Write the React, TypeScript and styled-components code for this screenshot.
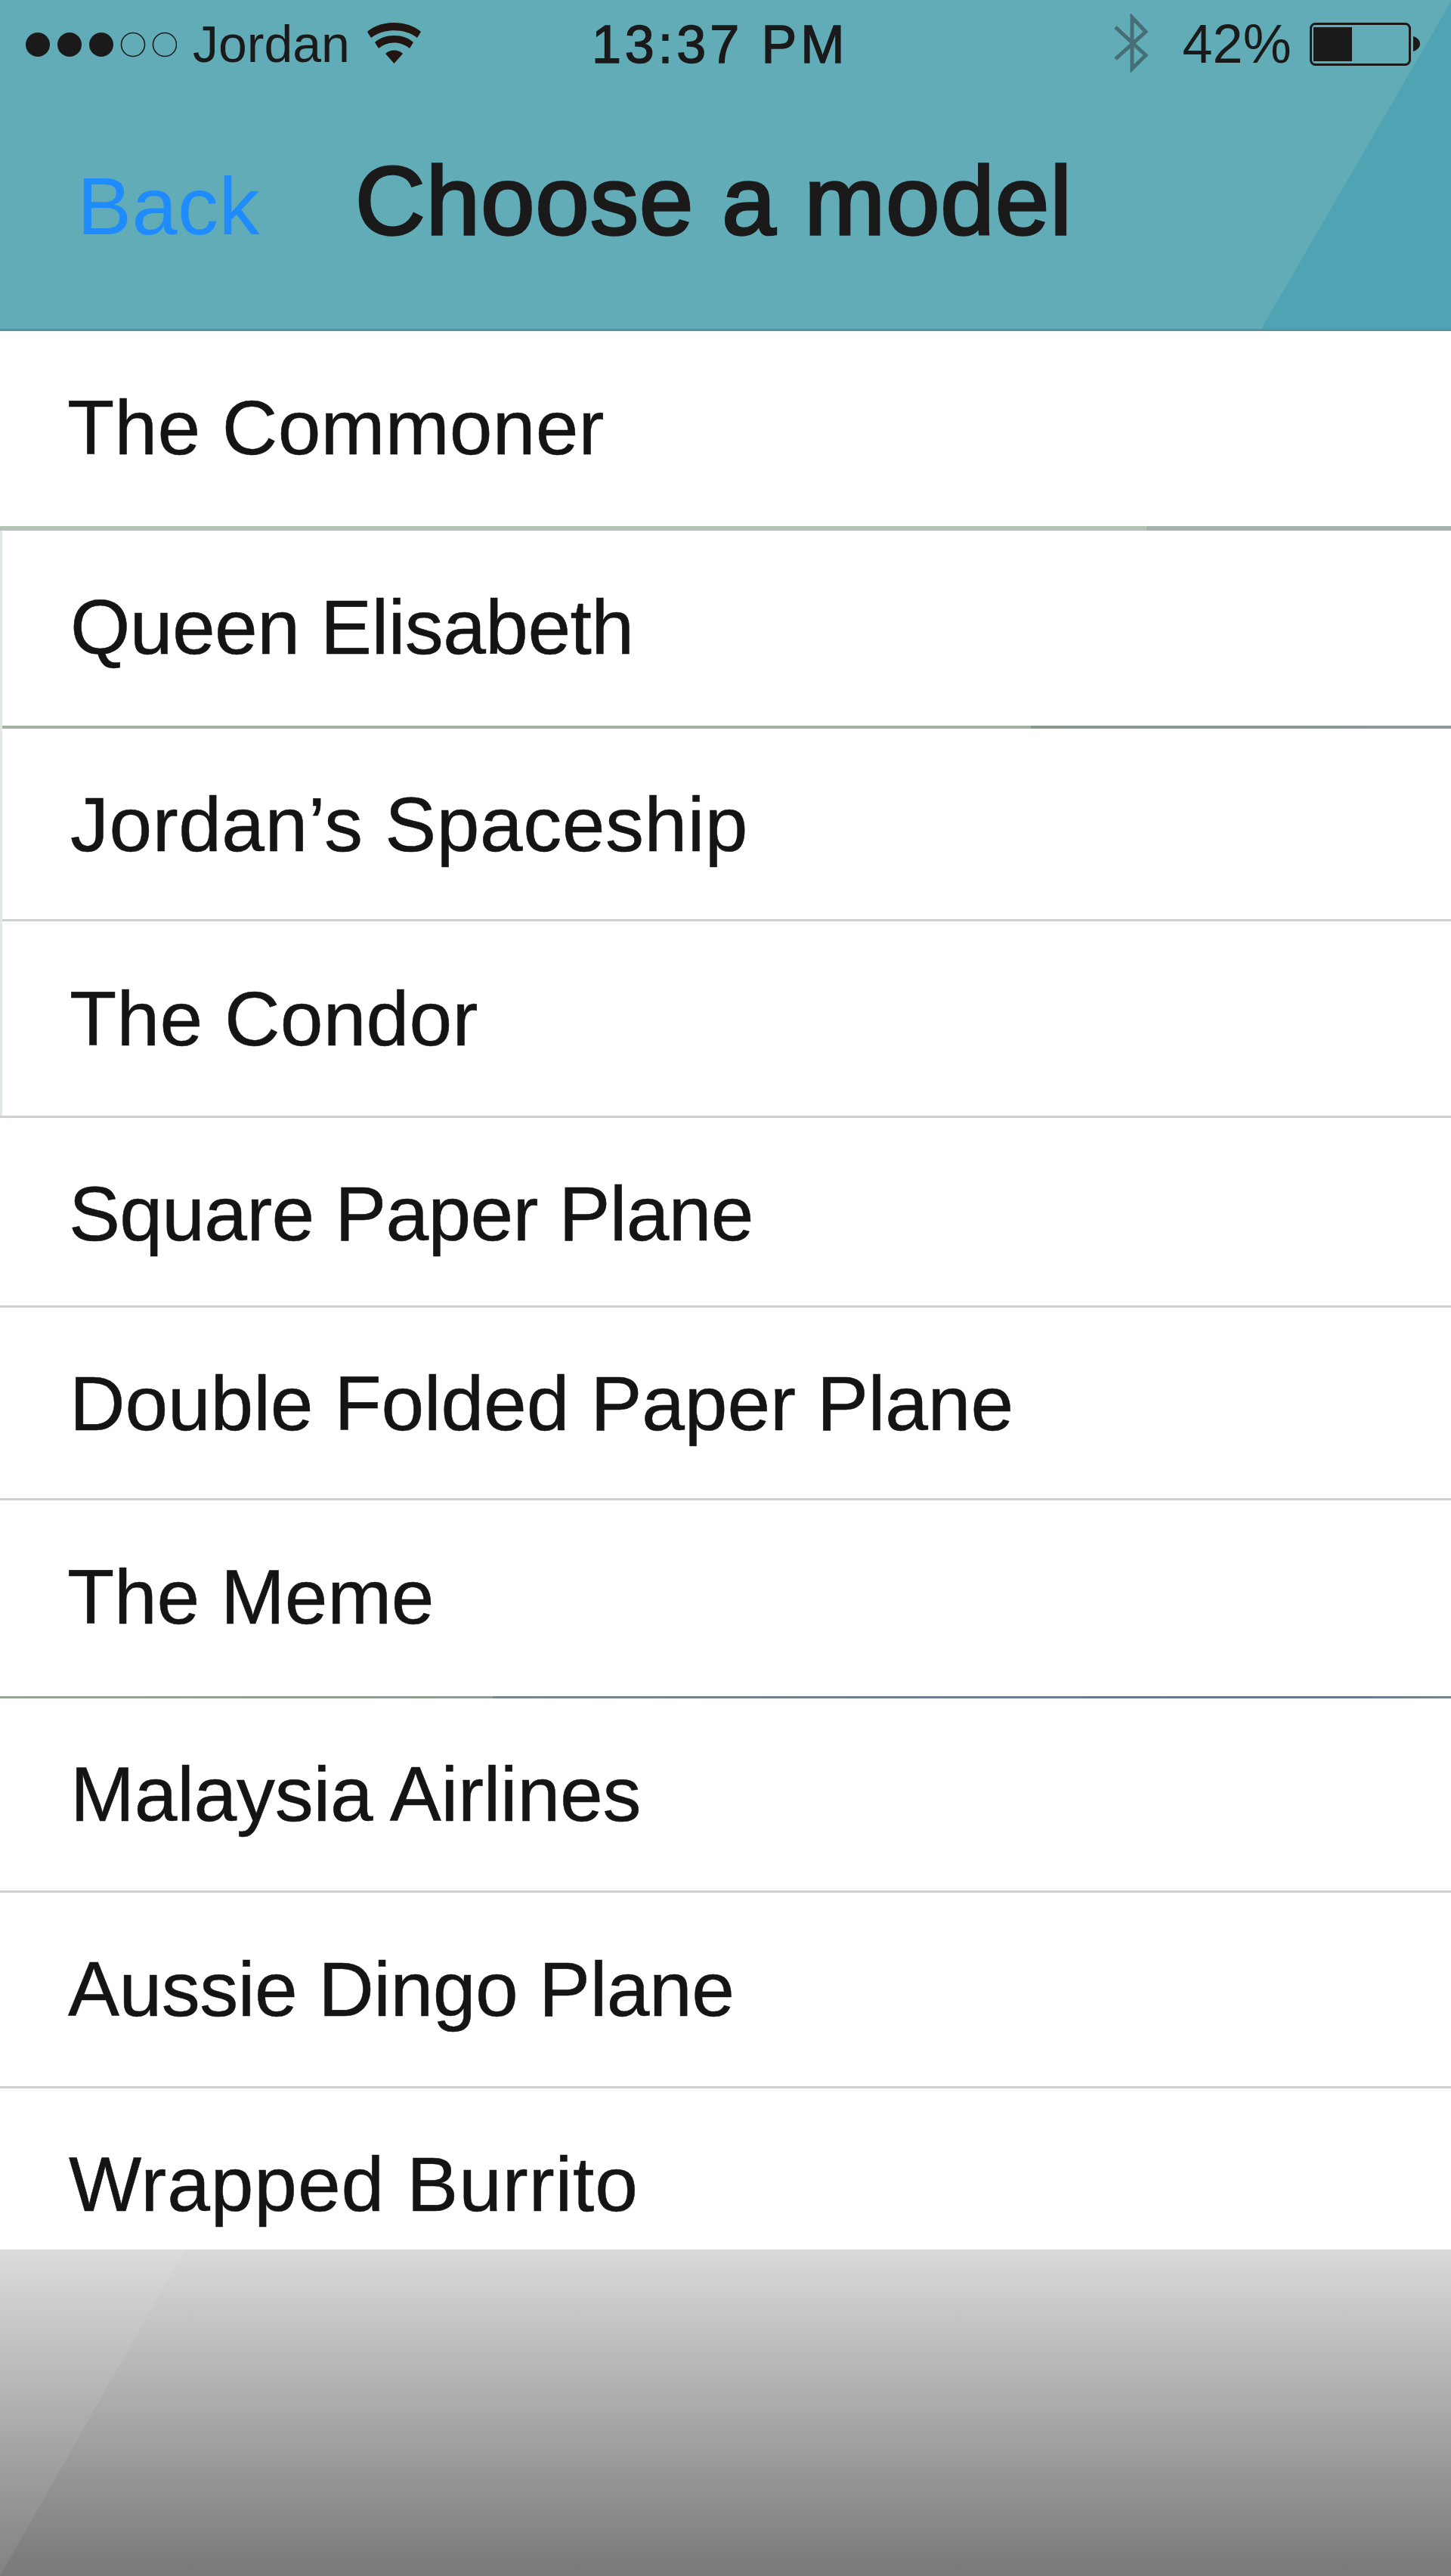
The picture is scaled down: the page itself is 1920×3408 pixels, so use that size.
import React from "react";
import styled, { createGlobalStyle } from "styled-components";

const Global = createGlobalStyle`
  html, body { margin: 0; padding: 0; background: #fff; }
  body { font-family: "Liberation Sans", Arial, sans-serif; }
`;

const Page = styled.div`
  width: 1920px;
  height: 3408px;
  display: flex;
  flex-direction: column;
  overflow: hidden;
  color: #1a1a1a;
`;

const Header = styled.header`
  position: relative;
  height: 438px;
  box-sizing: border-box;
  background: #62acb8;
  border-bottom: 3px solid #56939f;
  flex: none;
  &::after {
    content: "";
    position: absolute;
    inset: 0;
    background: #50a3b3;
    clip-path: polygon(1669px 100%, 1920px 2px, 1920px 100%);
  }
`;

const StatusBar = styled.div`
  position: relative;
  z-index: 1;
  height: 100px;
  display: flex;
  align-items: flex-start;
  padding-left: 34px;
`;

const StatusText = styled.span<{ $left: number; $top: number; $size: number; $spacing?: number; $stroke?: number }>`
  margin-left: ${(p) => p.$left}px;
  margin-top: ${(p) => p.$top}px;
  font-size: ${(p) => p.$size}px;
  line-height: 1;
  letter-spacing: ${(p) => p.$spacing ?? 0}px;
  -webkit-text-stroke: ${(p) => p.$stroke ?? 0}px #1a1a1a;
  white-space: nowrap;
`;

const StatusIcon = styled.svg<{ $left: number; $top: number }>`
  flex: none;
  display: block;
  margin-left: ${(p) => p.$left}px;
  margin-top: ${(p) => p.$top}px;
`;

const NavBar = styled.div`
  position: relative;
  z-index: 1;
  display: flex;
  align-items: baseline;
  padding-left: 102px;
  padding-top: 102px;
`;

const BackLink = styled.a`
  font-size: 108px;
  line-height: 1;
  color: #1e8cff;
  letter-spacing: 0.5px;
`;

const Title = styled.h1`
  margin: 0 0 0 126px;
  font-size: 128px;
  line-height: 1;
  font-weight: 400;
  letter-spacing: 1.2px;
  -webkit-text-stroke: 3.5px #1a1a1a;
  white-space: nowrap;
`;

const List = styled.ul`
  list-style: none;
  margin: 0;
  padding: 0;
  flex: 1;
  min-height: 0;
  display: flex;
  flex-direction: column;
`;

const Row = styled.li<{
  $height: number;
  $indent: number;
  $line: string;
  $lineWidth: number;
  $spacing: number;
  $shift: number;
  $edgeDrop?: number;
}>`
  position: relative;
  flex: none;
  box-sizing: border-box;
  height: ${(p) => p.$height}px;
  display: flex;
  align-items: center;
  padding-left: ${(p) => p.$indent}px;
  padding-top: ${(p) => Math.max(p.$shift, 0) * 2}px;
  padding-bottom: ${(p) => Math.max(-p.$shift, 0) * 2}px;
  font-size: 102px;
  line-height: 1;
  letter-spacing: ${(p) => p.$spacing}px;
  color: #141414;
  -webkit-text-stroke: 0.5px #141414;
  background: #fff;
  border-bottom: ${(p) => p.$lineWidth}px solid;
  border-image: ${(p) => p.$line} 1;
  white-space: nowrap;
  &::before {
    content: "";
    display: ${(p) => (p.$edgeDrop === undefined ? "none" : "block")};
    position: absolute;
    left: 0;
    top: 0;
    bottom: ${(p) => -(p.$edgeDrop ?? 0)}px;
    width: 3px;
    background: #dfe9e2;
  }
`;

const Footer = styled.footer`
  position: relative;
  flex: none;
  height: 432px;
  background: linear-gradient(180deg, #dadada 0%, #787878 100%);
  &::after {
    content: "";
    position: absolute;
    inset: 0;
    background: rgba(255, 255, 255, 0.07);
    clip-path: polygon(0 0, 245px 0, 0 100%);
  }
`;

const plain = "linear-gradient(90deg, #d0d0d0, #d0d0d0)";

const rows = [
  { name: "The Commoner", h: 264, x: 89, line: "linear-gradient(90deg, #b3c4b4 79%, #a4b4aa 79%)", w: 6, s: 0.18, d: -1.5 },
  { name: "Queen Elisabeth", h: 262, x: 93, line: "linear-gradient(90deg, #a4b0a2 71%, #87988f 71%, #8a9a9a)", w: 4, s: -0.58, d: -1, edge: 4 },
  { name: "Jordan’s Spaceship", h: 255, x: 93, line: plain, w: 3, s: 0.48, d: 0.5, edge: 3 },
  { name: "The Condor", h: 260, x: 92, line: plain, w: 3, s: 0.2, d: 0.5, edge: 0 },
  { name: "Square Paper Plane", h: 251, x: 91, line: plain, w: 3, s: -0.72, d: 2.5 },
  { name: "Double Folded Paper Plane", h: 255, x: 92, line: plain, w: 3, s: -0.17, d: 1 },
  { name: "The Meme", h: 262, x: 89, line: "linear-gradient(90deg, #98a396, #8c9c90 34%, #758690 34%, #64788a 92%, #75858f)", w: 3, s: -0.27, d: -1.5 },
  { name: "Malaysia Airlines", h: 257, x: 93, line: plain, w: 3, s: -0.26, d: -0.5 },
  { name: "Aussie Dingo Plane", h: 259, x: 90, line: plain, w: 3, s: -0.48, d: 0 },
  { name: "Wrapped Burrito", h: 213, x: 91, line: plain, w: 0, s: 0.87, d: 20 },
];

const SignalDots = () => (
  <StatusIcon $left={0} $top={42} width={200} height={34} viewBox="0 0 200 34">
    {[16, 58, 100].map((cx) => (
      <circle key={cx} cx={cx} cy={17} r={16} fill="#1a1a1a" />
    ))}
    {[142, 184].map((cx) => (
      <circle key={cx} cx={cx} cy={17} r={15.5} fill="none" stroke="#1a1a1a" strokeWidth={1.6} />
    ))}
  </StatusIcon>
);

const Wifi = () => (
  <StatusIcon $left={23} $top={30} width={71} height={54} viewBox="0 0 71 54">
    <path d="M0 12C18 -4 53 -4 71 12L66 20C50 7 21 7 5 20Z" fill="#221410" />
    <path d="M10 26C23 14 48 14 61 26L56 34C44 24 27 24 15 34Z" fill="#221410" />
    <path d="M24 41C30 35 41 35 47 41L35.500 54Z" fill="#221410" />
  </StatusIcon>
);

const Bluetooth = () => (
  <StatusIcon $left={351} $top={18} width={46} height={78} viewBox="0 0 46 78">
    <path d="M2 18L42 55L24 73V5L42 24L2 60" fill="none" stroke="#466e75" strokeWidth={5} />
  </StatusIcon>
);

const Battery = () => (
  <StatusIcon $left={24} $top={30} width={146} height={58} viewBox="0 0 146 58">
    <rect x={1.5} y={1.5} width={131} height={54} rx={6} fill="none" stroke="#1a1a1a" strokeWidth={3} />
    <rect x={5} y={6} width={51} height={45} fill="#1a1a1a" />
    <path d="M137 18C143 20 146 24 146 28C146 32 143 36 137 38Z" fill="#1a1a1a" />
  </StatusIcon>
);

export default function App() {
  return (
    <>
      <Global />
      <Page>
        <Header>
          <StatusBar>
            <SignalDots />
            <StatusText $left={21} $top={24} $size={68}>Jordan</StatusText>
            <Wifi />
            <StatusText $left={226} $top={24} $size={70} $spacing={5} $stroke={1.5}>13:37 PM</StatusText>
            <Bluetooth />
            <StatusText $left={45} $top={22} $size={72}>42%</StatusText>
            <Battery />
          </StatusBar>
          <NavBar>
            <BackLink>Back</BackLink>
            <Title>Choose a model</Title>
          </NavBar>
        </Header>
        <List>
          {rows.map((r) => (
            <Row
              key={r.name}
              $height={r.h}
              $indent={r.x}
              $line={r.line}
              $lineWidth={r.w}
              $spacing={r.s}
              $shift={r.d}
              $edgeDrop={r.edge}
            >
              {r.name}
            </Row>
          ))}
        </List>
        <Footer />
      </Page>
    </>
  );
}
